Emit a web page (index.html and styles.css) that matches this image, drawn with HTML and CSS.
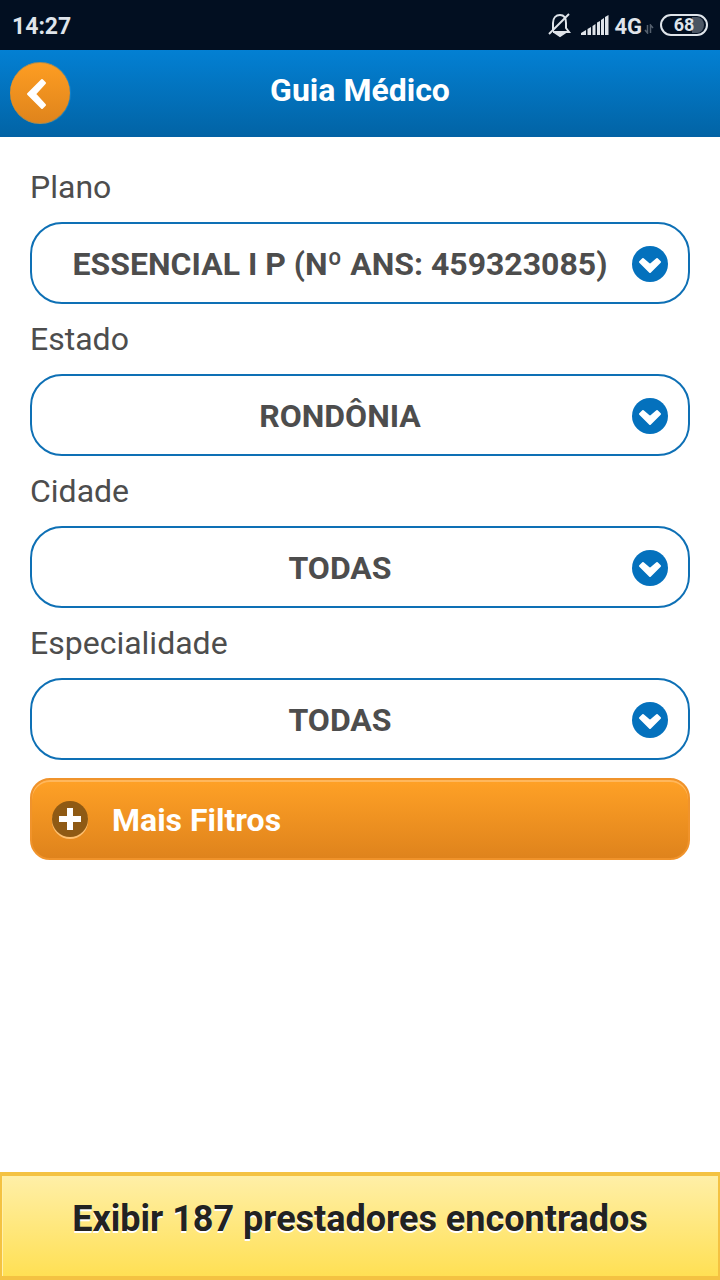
FILE: index.html
```html
<!DOCTYPE html>
<html lang="pt-BR">

<head>
    <meta charset="UTF-8">
    <meta name="viewport" content="width=device-width, initial-scale=1">
    <title>Guia Médico</title>
    <link rel="stylesheet" href="styles.css">
</head>

<body>

    <!-- status bar -->
    <div class="status">
        <span class="time">14:27</span>
        <div class="status-icons">
            <svg class="bell" width="24" height="26" viewBox="0 0 24 26" fill="none" stroke="#dfe4ea" stroke-width="2">
                <path d="M5 19 V11 C5 6 8 3 12 3 C16 3 18 6 18 11 V16 L21 20 H5" />
                <path d="M1 22 L21 2" />
                <path d="M9 22 H15 L12 24Z" />
            </svg>
            <svg class="signal" width="28" height="20" viewBox="0 0 28 20" fill="#dfe4ea">
                <path d="M0 20 V18 L5 15 V20Z M6.500 20 V14 L10 12 V20Z M11.500 20 V11 L14.500 9 V20Z M16 20 V7.500 L19 6 V20Z M20 20 V5 L23 3 V20Z M24 20 V2 L27.500 0 V20Z" />
            </svg>
            <span class="net">4G</span>
            <svg class="data" width="10" height="10" viewBox="0 0 10 10" fill="none" stroke="#55606e" stroke-width="1.500">
                <path d="M3.500 1 V9 L1 6 M6.500 9 V1 L9 4" />
            </svg>
            <span class="battery">68</span>
        </div>
    </div>

    <!-- header -->
    <header class="header">
        <button type="button" class="back" aria-label="Voltar">
            <svg width="60" height="60" viewBox="0 0 60 60" fill="#fff" stroke="#fff" stroke-width="2" stroke-linejoin="round">
                <path d="M32 17 L35 20 L25 31 L35 42 L32 45 L18 31Z" />
            </svg>
        </button>
        <h1>Guia Médico</h1>
    </header>

    <!-- filters -->
    <main class="filters">
        <label class="lb" for="plano">Plano</label>
        <div class="select-box">
            <select id="plano">
                <option>ESSENCIAL I P (Nº ANS: 459323085)</option>
            </select>
            <svg class="arrow" width="36" height="36" viewBox="0 0 36 36">
                <circle cx="18" cy="18" r="18" fill="#0471bd" />
                <path d="M11 13 L18 19 L25 13 L28 16 L18 26 L8 16Z" fill="#fff" stroke="#fff" stroke-width="2" stroke-linejoin="round" />
            </svg>
        </div>

        <label class="lb" for="estado">Estado</label>
        <div class="select-box">
            <select id="estado">
                <option>RONDÔNIA</option>
            </select>
            <svg class="arrow" width="36" height="36" viewBox="0 0 36 36">
                <circle cx="18" cy="18" r="18" fill="#0471bd" />
                <path d="M11 13 L18 19 L25 13 L28 16 L18 26 L8 16Z" fill="#fff" stroke="#fff" stroke-width="2" stroke-linejoin="round" />
            </svg>
        </div>

        <label class="lb" for="cidade">Cidade</label>
        <div class="select-box">
            <select id="cidade">
                <option>TODAS</option>
            </select>
            <svg class="arrow" width="36" height="36" viewBox="0 0 36 36">
                <circle cx="18" cy="18" r="18" fill="#0471bd" />
                <path d="M11 13 L18 19 L25 13 L28 16 L18 26 L8 16Z" fill="#fff" stroke="#fff" stroke-width="2" stroke-linejoin="round" />
            </svg>
        </div>

        <label class="lb" for="especialidade">Especialidade</label>
        <div class="select-box">
            <select id="especialidade">
                <option>TODAS</option>
            </select>
            <svg class="arrow" width="36" height="36" viewBox="0 0 36 36">
                <circle cx="18" cy="18" r="18" fill="#0471bd" />
                <path d="M11 13 L18 19 L25 13 L28 16 L18 26 L8 16Z" fill="#fff" stroke="#fff" stroke-width="2" stroke-linejoin="round" />
            </svg>
        </div>

        <button type="button" class="more">
            <svg width="36" height="38" viewBox="0 0 36 38">
                <circle cx="18" cy="20" r="18" fill="#ffc070" />
                <circle cx="18" cy="18" r="18" fill="#8f5a14" />
                <path d="M18 7 V29 M7 18 H29" stroke="#fff" stroke-width="6" />
            </svg>
            Mais Filtros
        </button>
    </main>

    <button type="submit" class="show">Exibir 187 prestadores encontrados</button>

</body>

</html>
```
FILE: styles.css
```css
* {
    box-sizing: border-box;
    padding: 0;
    margin: 0;
}

body {
    display: flex;
    flex-direction: column;
    min-height: 100vh;
    background: #fff;
    color: #4d4d4d;
    font-family: Roboto, "Liberation Sans", sans-serif;
    font-size: 32px;
}

button,
select {
    font: inherit;
    font-weight: bold;
    cursor: pointer;
}

svg {
    display: block;
    flex: none;
}

/* status bar */
.status {
    display: flex;
    align-items: center;
    justify-content: space-between;
    height: 50px;
    padding: 0 12px;
    background: #020f21;
    color: #dfe4ea;
}

.time {
    padding-top: 2px;
    font-size: 23px;
    font-weight: bold;
}

.status-icons {
    display: flex;
    align-items: center;
}

.signal {
    margin: 0 5px 0 9px;
}

.net {
    padding-top: 2px;
    font-size: 22px;
    font-weight: bold;
}

.data {
    margin: 8px 6px 0 2px;
}

.battery {
    width: 48px;
    height: 22px;
    border: 2px solid #dfe4ea;
    border-radius: 11px;
    background: linear-gradient(to right, transparent 68%, #4b5563 68%);
    background-clip: content-box;
    padding: 1px 2px;
    font-size: 18px;
    font-weight: bold;
    line-height: 16px;
    text-align: center;
}

/* header */
.header {
    display: grid;
    grid-template-columns: 60px 1fr 60px;
    align-items: center;
    height: 87px;
    padding: 0 10px;
    border-bottom: 2px solid #0362a5;
    background: linear-gradient(#0380d3, #0264a6);
    color: #fff;
}

.header h1 {
    padding-bottom: 6px;
    font-size: 32px;
    text-align: center;
}

.back {
    width: 60px;
    height: 62px;
    border: 1px solid #b08c4c;
    border-width: 1px 0;
    border-radius: 50%;
    background: linear-gradient(#fd9d22, #df841c);
    box-shadow: 1px 0 1px #1684cc;
}

/* filters */
.filters {
    flex: 1;
    padding: 15px 30px 30px;
}

.lb {
    display: block;
    line-height: 70px;
}

.select-box {
    position: relative;
}

.select-box select {
    display: block;
    width: 100%;
    height: 82px;
    padding: 2px 60px 0 20px;
    border: 2px solid #0e70b5;
    border-radius: 32px;
    background: #fff;
    color: #4d4d4d;
    appearance: none;
    text-align: center;
    text-align-last: center;
}

.arrow {
    position: absolute;
    top: 24px;
    right: 22px;
    pointer-events: none;
}

.more {
    display: flex;
    align-items: center;
    gap: 24px;
    width: 100%;
    height: 82px;
    margin-top: 18px;
    padding: 2px 20px 0;
    border: 2px solid #f0932b;
    border-radius: 20px;
    background: linear-gradient(#ffa126, #df831c);
    box-shadow: inset 0 2px 0 #ffb75c;
    color: #fff;
}

/* bottom button */
.show {
    width: 100%;
    height: 108px;
    padding-bottom: 14px;
    border: solid #f4c242;
    border-width: 4px 2px;
    background: linear-gradient(#ffefa7, #ffe054);
    box-shadow: inset 1px 0 0 #fff0ac;
    color: #222;
    font-size: 36px;
    text-shadow: 0 2px 0 #fff;
}
```
